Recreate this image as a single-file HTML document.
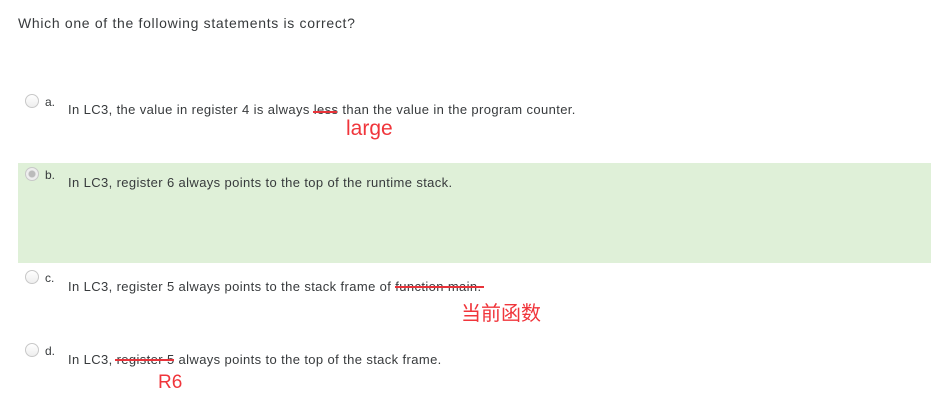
<!DOCTYPE html>
<html><head><style>
body{margin:0;width:931px;height:408px;background:#fff;font-family:"Liberation Sans","Noto Sans CJK SC",sans-serif;color:#373a3c;position:relative;overflow:hidden}
.a{position:absolute;white-space:nowrap}
.t{font-size:13px;letter-spacing:0.38px}
.r{position:absolute;width:12px;height:12px;border:1px solid #c8c8c8;border-radius:50%;background:linear-gradient(#fff,#eee)}
.l{font-size:12px}
.red{color:#f0353b;font-size:19px}
.s{position:absolute;height:2px;background:#e8333a}
</style></head><body>
<div class="a" style="left:18px;top:15px;font-size:14px;letter-spacing:0.68px">Which one of the following statements is correct?</div>
<div style="position:absolute;left:18px;top:163px;width:913px;height:100px;background:#dff0d8"></div>

<div class="r" style="left:25px;top:94px"></div>
<div class="a l" style="left:45px;top:95px">a.</div>
<div class="a t" style="left:68px;top:102px">In LC3, the value in register 4 is always less than the value in the program counter.</div>
<div class="s" style="left:313px;top:111px;width:24px"></div>
<div class="a red" style="left:346px;top:117px;font-size:21px">large</div>

<div class="r" style="left:25px;top:167px;background:radial-gradient(#bbb 0 3px,#eee 4px)"></div>
<div class="a l" style="left:45px;top:168px">b.</div>
<div class="a t" style="left:68px;top:175px">In LC3, register 6 always points to the top of the runtime stack.</div>

<div class="r" style="left:25px;top:270px"></div>
<div class="a l" style="left:45px;top:271px">c.</div>
<div class="a t" style="left:68px;top:279px">In LC3, register 5 always points to the stack frame of function main.</div>
<div class="s" style="left:395px;top:286px;width:89px"></div>
<div class="a red" style="left:461px;top:297px;font-size:20px">当前函数</div>

<div class="r" style="left:25px;top:343px"></div>
<div class="a l" style="left:45px;top:344px">d.</div>
<div class="a t" style="left:68px;top:352px">In LC3, register 5 always points to the top of the stack frame.</div>
<div class="s" style="left:115px;top:359px;width:59px"></div>
<div class="a red" style="left:158px;top:372px">R6</div>
</body></html>
